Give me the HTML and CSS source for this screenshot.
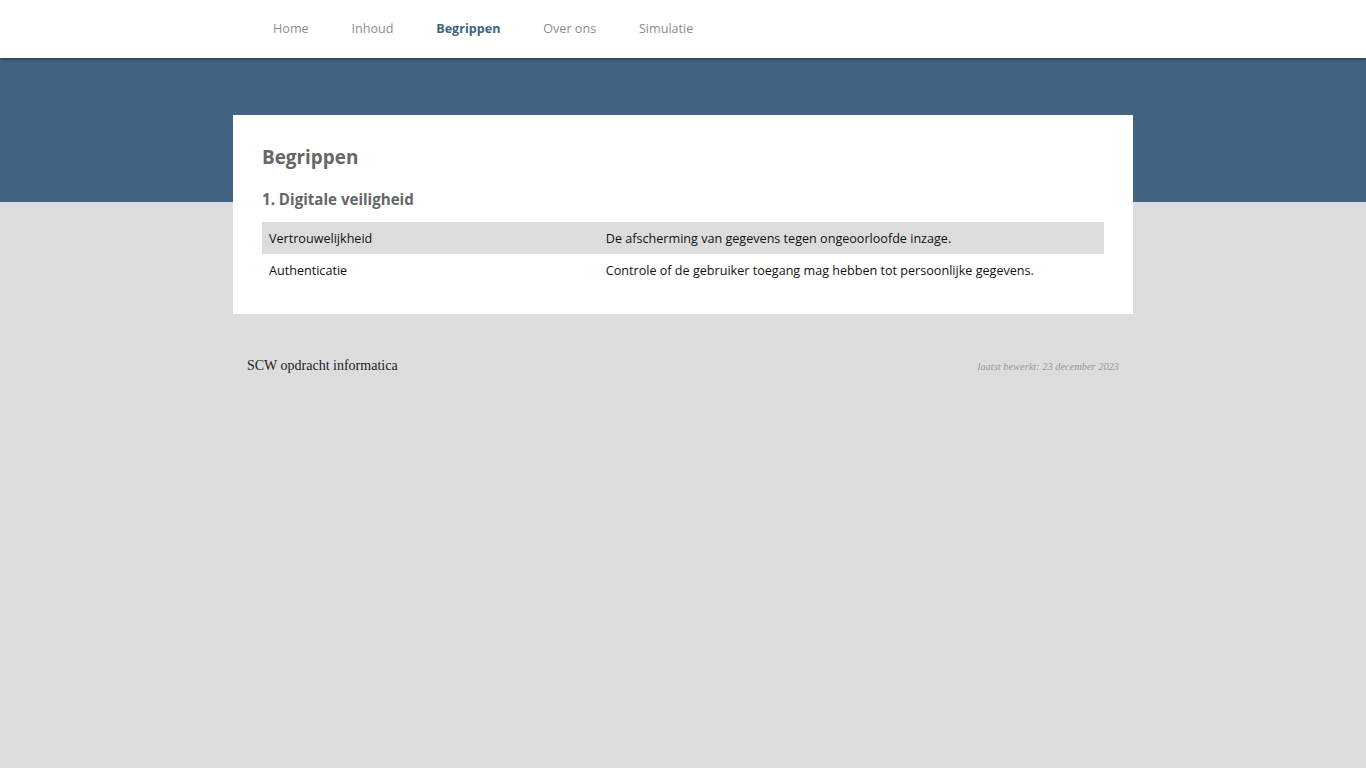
FILE: index.html
```html
<!DOCTYPE html>
<html lang="nl">
<head>
<meta charset="utf-8">
<title>Begrippen</title>
<link rel="stylesheet" href="styles.css">
</head>
<body>
<header class="site-header">
  <nav class="nav">
    <a class="nav-link" href="#">Home</a>
    <a class="nav-link" href="#">Inhoud</a>
    <a class="nav-link active" href="#">Begrippen</a>
    <a class="nav-link" href="#">Over ons</a>
    <a class="nav-link" href="#">Simulatie</a>
  </nav>
</header>
<main class="stage">
  <section class="card">
    <h1 class="title">Begrippen</h1>
    <h2 class="subtitle">1. Digitale veiligheid</h2>
    <table class="terms">
      <tr class="odd">
        <td class="term">Vertrouwelijkheid</td>
        <td>De afscherming van gegevens tegen ongeoorloofde inzage.</td>
      </tr>
      <tr>
        <td class="term">Authenticatie</td>
        <td>Controle of de gebruiker toegang mag hebben tot persoonlijke gegevens.</td>
      </tr>
    </table>
  </section>
  <footer class="footer">
    <span class="footer-title">SCW opdracht informatica</span>
    <span class="footer-date">laatst bewerkt: 23 december 2023</span>
  </footer>
</main>
</body>
</html>
```
FILE: styles.css
```css
html, body {
  margin: 0;
  padding: 0;
}
body {
  background: #dcdcdc;
  font-family: "Open Sans", "Liberation Sans", sans-serif;
  min-height: 768px;
}
.site-header {
  background: #ffffff;
  height: 58px;
  box-shadow: 0 1px 3px rgba(0, 0, 0, 0.45);
  position: relative;
  z-index: 2;
}
.nav {
  width: 900px;
  margin: 0 auto;
  display: flex;
  height: 58px;
  align-items: center;
  padding-left: 18.7px;
  box-sizing: border-box;
}
.nav-link {
  font-size: 12.6px;
  color: #8c8c8c;
  text-decoration: none;
  padding: 0 21.4px;
  line-height: 18px;
  margin-top: 0;
}
.nav-link.active {
  color: #41637f;
  font-weight: 700;
}
.stage {
  background: linear-gradient(to bottom, #41637f 0, #41637f 144px, #dcdcdc 144px);
  padding-top: 57px;
}
.card {
  width: 900px;
  margin: 0 auto;
  background: #ffffff;
  box-sizing: border-box;
  padding: 30px 29px 28px;
}
.title {
  margin: 0;
  font-size: 18.9px;
  line-height: 24px;
  font-weight: 700;
  color: #666666;
}
.subtitle {
  margin: 20px 0 13px;
  font-size: 15.1px;
  line-height: 20px;
  font-weight: 700;
  color: #666666;
}
.terms {
  width: 100%;
  border-collapse: collapse;
  font-size: 12.6px;
  color: #111111;
}
.terms td {
  padding: 8px 7px 6px;
  line-height: 18px;
  vertical-align: middle;
}
.terms td.term {
  width: 40%;
}
.terms tr.odd {
  background: #dcdcdc;
}
.footer {
  width: 900px;
  margin: 0 auto;
  box-sizing: border-box;
  padding: 44px 14px 0;
  display: flex;
  justify-content: space-between;
  align-items: baseline;
  font-family: "Liberation Serif", "DejaVu Serif", serif;
}
.footer-title {
  font-size: 14px;
  color: #222222;
}
.footer-date {
  font-size: 10.4px;
  font-style: italic;
  color: #999999;
}
```
